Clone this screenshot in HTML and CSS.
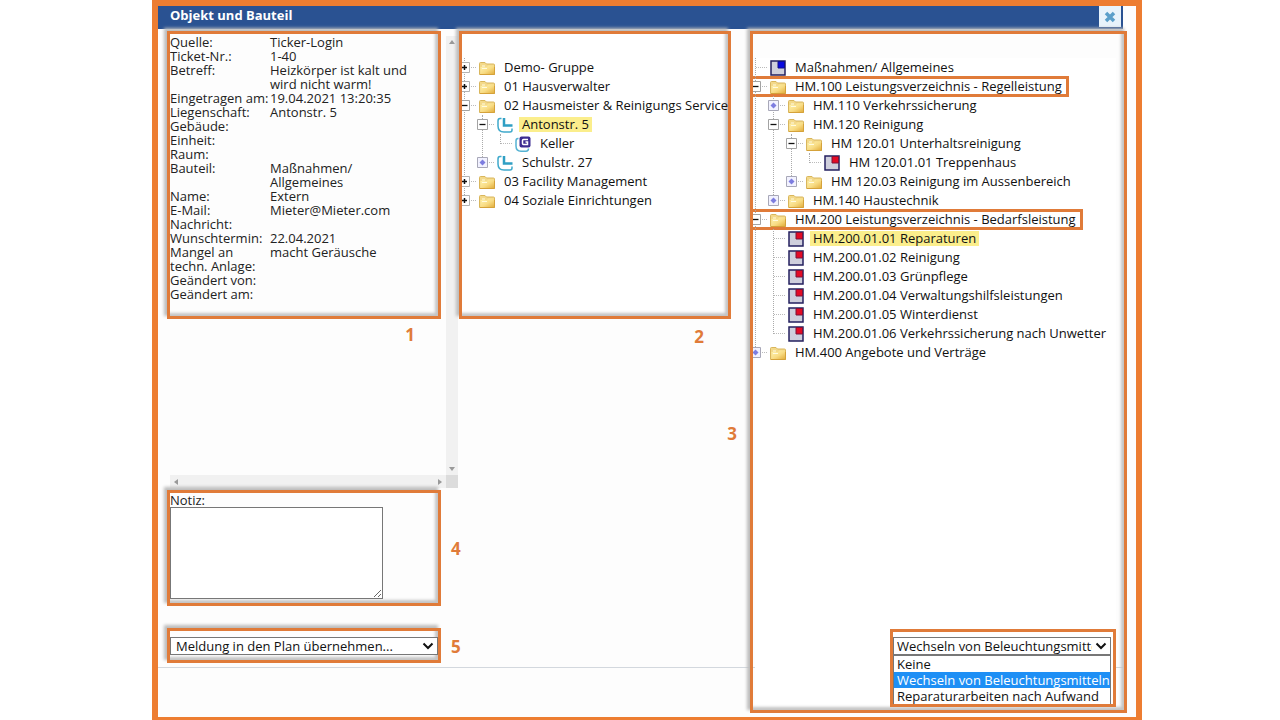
FILE: index.html
```html
<!DOCTYPE html>
<html lang="de">
<head>
<meta charset="utf-8">
<title>Objekt und Bauteil</title>
<link rel="stylesheet" href="styles.css">
</head>
<body>
<svg class="sprite" aria-hidden="true">
  <defs>
    <linearGradient id="gold" x1="0" y1="0" x2="1" y2="1">
      <stop offset="0" stop-color="#fff3b0"/><stop offset="0.55" stop-color="#f8dc84"/><stop offset="1" stop-color="#e3b040"/>
    </linearGradient>
  </defs>
  <symbol id="folder" viewBox="0 0 16 16">
    <path d="M.5 14.500V3.500Q.5 2.500 1.500 2.500H6L7.500 4H14.500Q15.500 4 15.500 5V14.500Z" fill="#f3d98a" stroke="#d9b65c"/>
    <path d="M1.500 14V7H8L9.500 5.500H15V14Z" fill="url(#gold)"/>
    <path d="M3 8.500H8M3 6H6" stroke="#fffbe0"/>
    <path d="M1 14.500H15.500V7" fill="none" stroke="#d5a23a"/>
  </symbol>
  <symbol id="leaf-red" viewBox="0 0 16 16">
    <path d="M1 1H15V15H1Z" fill="#cfcfdc" stroke="#25205f" stroke-width="1.500"/>
    <path d="M8 1.500H14.500V8H8Z" fill="#e30b25" stroke="#7b1238"/>
  </symbol>
  <symbol id="leaf-blue" viewBox="0 0 16 16">
    <path d="M1 1H15V15H1Z" fill="#cfcfdc" stroke="#25205f" stroke-width="1.500"/>
    <path d="M8 1.500H14.500V8H8Z" fill="#0a0ae0" stroke="#10108a"/>
  </symbol>
  <symbol id="estate" viewBox="0 0 16 16">
    <path d="M4.500 1.500H3Q1 1.500 1 4V9Q1 15 7 15H13Q15 15 15 13V11.500" fill="none" stroke="#3fa9cb" stroke-width="1.500"/>
    <path d="M7 1V8.500H15.500" fill="none" stroke="#2f9fc4" stroke-width="2.500"/>
  </symbol>
  <symbol id="building" viewBox="0 0 16 16">
    <path d="M3.500 2.500H3Q1 2.500 1 5V10Q1 15.200 6 15.200H11Q13.500 15.200 13.500 12.500" fill="none" stroke="#55b3d3" stroke-width="1.500"/>
    <rect x="4.500" y="0.500" width="11" height="11" rx="2" fill="#3d2d91"/>
    <path d="M13 3.500H8.500Q7.500 3.500 7.500 4.500V7.500Q7.500 8.500 8.500 8.500H12.500V6H10.500" fill="none" stroke="#fff" stroke-width="1.500"/>
  </symbol>
  <symbol id="plus" viewBox="0 0 11 11">
    <path d="M.5 .5H10.500V10.500H.5Z" fill="#fff" stroke="#b3b3b3"/><path d="M3 5.500H8M5.500 3V8" stroke="#111" stroke-width="1.500"/>
  </symbol>
  <symbol id="minus" viewBox="0 0 11 11">
    <path d="M.5 .5H10.500V10.500H.5Z" fill="#fff" stroke="#a3a3a3"/><path d="M2.500 5.500H8.500" stroke="#111" stroke-width="1.300"/>
  </symbol>
  <symbol id="more" viewBox="0 0 11 11">
    <path d="M.5 .5H10.500V10.500H.5Z" fill="#f2f2ff" stroke="#a8a8b8"/><path d="M5.500 2.500L8.500 5.500L5.500 8.500L2.500 5.500Z" fill="#7d7de0"/>
  </symbol>
</svg>

<div class="window">
  <header class="titlebar">
    <h1 class="title">Objekt und Bauteil</h1>
    <button class="close" type="button" aria-label="Schließen"><svg viewBox="0 0 12 12"><path d="M2 2L10 10M10 2L2 10" stroke="#5b9fca" stroke-width="3.500"/></svg></button>
  </header>

  <main class="content">
    <div class="footer-area"></div>

    <section class="col-details">
      <div class="scroller">
        <div class="view">
          <div class="callout details">
            <dl class="facts">
              <dt>Quelle:</dt><dd>Ticker-Login</dd>
              <dt>Ticket-Nr.:</dt><dd>1-40</dd>
              <dt>Betreff:</dt><dd>Heizkörper ist kalt und<br>wird nicht warm!</dd>
              <dt>Eingetragen am:</dt><dd>19.04.2021 13:20:35</dd>
              <dt>Liegenschaft:</dt><dd>Antonstr. 5</dd>
              <dt>Gebäude:</dt><dd></dd>
              <dt>Einheit:</dt><dd></dd>
              <dt>Raum:</dt><dd></dd>
              <dt>Bauteil:</dt><dd>Maßnahmen/<br>Allgemeines</dd>
              <dt>Name:</dt><dd>Extern</dd>
              <dt>E-Mail:</dt><dd>Mieter@Mieter.com</dd>
              <dt>Nachricht:</dt><dd></dd>
              <dt>Wunschtermin:</dt><dd>22.04.2021</dd>
              <dt>Mangel an<br>techn. Anlage:</dt><dd>macht Geräusche</dd>
              <dt>Geändert von:</dt><dd></dd>
              <dt>Geändert am:</dt><dd></dd>
            </dl>
          </div>
          <p class="mark mark-below">1</p>
        </div>
        <div class="bar bar-v">
          <svg viewBox="0 0 6 4"><path d="M0 4L3 0L6 4Z"/></svg>
          <svg viewBox="0 0 6 4"><path d="M0 0L3 4L6 0Z"/></svg>
        </div>
        <div class="bar bar-h">
          <svg viewBox="0 0 4 6"><path d="M4 0L0 3L4 6Z"/></svg>
          <svg viewBox="0 0 4 6"><path d="M0 0L4 3L0 6Z"/></svg>
        </div>
        <div class="corner"></div>
      </div>
      <div class="marked">
        <div class="callout note">
          <label class="note-label" for="notiz">Notiz:</label>
          <textarea class="note-text" id="notiz"></textarea>
        </div>
        <p class="mark">4</p>
      </div>
      <div class="marked">
        <div class="callout action">
          <div class="field">
            <select class="select" aria-label="Aktion"><option>Meldung in den Plan übernehmen...</option></select>
            <svg class="chevron" viewBox="0 0 12 8"><path d="M1.500 1.500L6 6L10.500 1.500"/></svg>
          </div>
        </div>
        <p class="mark">5</p>
      </div>
    </section>

    <section class="col-objects">
      <div class="callout objects">
        <div class="tree">
          <ul class="branch root">
            <li><div class="row"><span class="twig"><button class="toggle" type="button" aria-label="Öffnen"><svg><use href="#plus"/></svg></button></span><svg class="icon"><use href="#folder"/></svg><span class="name">Demo- Gruppe</span></div></li>
            <li><div class="row"><span class="twig"><button class="toggle" type="button" aria-label="Öffnen"><svg><use href="#plus"/></svg></button></span><svg class="icon"><use href="#folder"/></svg><span class="name">01 Hausverwalter</span></div></li>
            <li><div class="row"><span class="twig"><button class="toggle" type="button" aria-label="Schließen"><svg><use href="#minus"/></svg></button></span><svg class="icon"><use href="#folder"/></svg><span class="name">02 Hausmeister &amp; Reinigungs Service</span></div>
              <ul class="branch">
                <li><div class="row"><span class="twig"><button class="toggle" type="button" aria-label="Schließen"><svg><use href="#minus"/></svg></button></span><svg class="icon"><use href="#estate"/></svg><span class="name chosen">Antonstr. 5</span></div>
                  <ul class="branch">
                    <li><div class="row"><span class="twig"></span><svg class="icon"><use href="#building"/></svg><span class="name">Keller</span></div></li>
                  </ul>
                </li>
                <li><div class="row"><span class="twig"><button class="toggle" type="button" aria-label="Öffnen"><svg><use href="#more"/></svg></button></span><svg class="icon"><use href="#estate"/></svg><span class="name">Schulstr. 27</span></div></li>
              </ul>
            </li>
            <li><div class="row"><span class="twig"><button class="toggle" type="button" aria-label="Öffnen"><svg><use href="#plus"/></svg></button></span><svg class="icon"><use href="#folder"/></svg><span class="name">03 Facility Management</span></div></li>
            <li><div class="row"><span class="twig"><button class="toggle" type="button" aria-label="Öffnen"><svg><use href="#plus"/></svg></button></span><svg class="icon"><use href="#folder"/></svg><span class="name">04 Soziale Einrichtungen</span></div></li>
          </ul>
        </div>
      </div>
      <p class="mark mark-below">2</p>
      <p class="mark mark-side">3</p>
    </section>

    <section class="callout services">
      <div class="tree">
        <ul class="branch root">
          <li><div class="row"><span class="twig"></span><svg class="icon"><use href="#leaf-blue"/></svg><span class="name">Maßnahmen/ Allgemeines</span></div></li>
          <li><div class="row framed"><span class="twig"><button class="toggle" type="button" aria-label="Schließen"><svg><use href="#minus"/></svg></button></span><svg class="icon"><use href="#folder"/></svg><span class="name">HM.100 Leistungsverzeichnis - Regelleistung</span></div>
            <ul class="branch">
              <li><div class="row"><span class="twig"><button class="toggle" type="button" aria-label="Öffnen"><svg><use href="#more"/></svg></button></span><svg class="icon"><use href="#folder"/></svg><span class="name">HM.110 Verkehrssicherung</span></div></li>
              <li><div class="row"><span class="twig"><button class="toggle" type="button" aria-label="Schließen"><svg><use href="#minus"/></svg></button></span><svg class="icon"><use href="#folder"/></svg><span class="name">HM.120 Reinigung</span></div>
                <ul class="branch">
                  <li><div class="row"><span class="twig"><button class="toggle" type="button" aria-label="Schließen"><svg><use href="#minus"/></svg></button></span><svg class="icon"><use href="#folder"/></svg><span class="name">HM 120.01 Unterhaltsreinigung</span></div>
                    <ul class="branch">
                      <li><div class="row"><span class="twig"></span><svg class="icon"><use href="#leaf-red"/></svg><span class="name">HM 120.01.01 Treppenhaus</span></div></li>
                    </ul>
                  </li>
                  <li><div class="row"><span class="twig"><button class="toggle" type="button" aria-label="Öffnen"><svg><use href="#more"/></svg></button></span><svg class="icon"><use href="#folder"/></svg><span class="name">HM 120.03 Reinigung im Aussenbereich</span></div></li>
                </ul>
              </li>
              <li><div class="row"><span class="twig"><button class="toggle" type="button" aria-label="Öffnen"><svg><use href="#more"/></svg></button></span><svg class="icon"><use href="#folder"/></svg><span class="name">HM.140 Haustechnik</span></div></li>
            </ul>
          </li>
          <li><div class="row framed"><span class="twig"><button class="toggle" type="button" aria-label="Schließen"><svg><use href="#minus"/></svg></button></span><svg class="icon"><use href="#folder"/></svg><span class="name">HM.200 Leistungsverzeichnis - Bedarfsleistung</span></div>
            <ul class="branch">
              <li><div class="row"><span class="twig"></span><svg class="icon"><use href="#leaf-red"/></svg><span class="name chosen">HM.200.01.01 Reparaturen</span></div></li>
              <li><div class="row"><span class="twig"></span><svg class="icon"><use href="#leaf-red"/></svg><span class="name">HM.200.01.02 Reinigung</span></div></li>
              <li><div class="row"><span class="twig"></span><svg class="icon"><use href="#leaf-red"/></svg><span class="name">HM.200.01.03 Grünpflege</span></div></li>
              <li><div class="row"><span class="twig"></span><svg class="icon"><use href="#leaf-red"/></svg><span class="name">HM.200.01.04 Verwaltungshilfsleistungen</span></div></li>
              <li><div class="row"><span class="twig"></span><svg class="icon"><use href="#leaf-red"/></svg><span class="name">HM.200.01.05 Winterdienst</span></div></li>
              <li><div class="row"><span class="twig"></span><svg class="icon"><use href="#leaf-red"/></svg><span class="name">HM.200.01.06 Verkehrssicherung nach Unwetter</span></div></li>
            </ul>
          </li>
          <li><div class="row"><span class="twig"><button class="toggle" type="button" aria-label="Öffnen"><svg><use href="#more"/></svg></button></span><svg class="icon"><use href="#folder"/></svg><span class="name">HM.400 Angebote und Verträge</span></div></li>
        </ul>
      </div>
      <div class="picker">
        <div class="field">
          <select class="select" aria-label="Leistung">
            <option>Keine</option>
            <option selected>Wechseln von Beleuchtungsmitteln</option>
            <option>Reparaturarbeiten nach Aufwand</option>
          </select>
          <svg class="chevron" viewBox="0 0 12 8"><path d="M1.500 1.500L6 6L10.500 1.500"/></svg>
        </div>
        <ul class="options" role="listbox" aria-label="Leistung">
          <li class="option" role="option">Keine</li>
          <li class="option active" role="option" aria-selected="true">Wechseln von Beleuchtungsmitteln</li>
          <li class="option" role="option">Reparaturarbeiten nach Aufwand</li>
        </ul>
      </div>
    </section>
  </main>
</div>
</body>
</html>
```

FILE: styles.css
```css
* { box-sizing: border-box; }

body {
  margin: 0;
  padding: 0 138px 0 152px;
  background: #fff;
  color: #222;
  font: 13px/14px "Open Sans", "Noto Sans", sans-serif;
}

ul, dl, dd, p, h1 { margin: 0; padding: 0; list-style: none; }

.sprite { position: absolute; width: 0; height: 0; }

.window {
  display: flex;
  flex-direction: column;
  min-height: 100vh;
  border: 6px solid #ed7d31;
  border-bottom-width: 3px;
  background: #fdfdfd;
}

.titlebar {
  display: flex;
  align-items: flex-start;
  justify-content: space-between;
  height: 23px;
  margin-right: 13px;
  padding: 0 2px 0 12px;
  background: #2a5292;
}

.title { color: #fff; font-size: 13px; line-height: 18px; font-weight: bold; }

.close {
  display: flex;
  align-items: center;
  justify-content: center;
  width: 22px;
  height: 21px;
  padding: 0;
  border: 0;
  background: #e8f3fb;
}
.close svg { width: 12px; height: 12px; }

.content {
  flex: 1;
  display: grid;
  grid-template-columns: minmax(0, 291fr) minmax(0, 292fr) minmax(0, 377fr);
  grid-template-rows: 1fr 50px;
  padding: 0 9px;
}

.footer-area {
  grid-area: 2 / 1 / 3 / -1;
  margin: 0 4px 0 -9px;
  border-top: 1px solid #d3d8de;
}

.callout {
  border: 3px solid #e07b39;
  box-shadow: -3px -3px 3px #bcbcbc, inset -3px -3px 3px #c4c4c4;
}

.mark { color: #e07b39; font-size: 17px; line-height: 20px; font-weight: bold; }
.mark-below { margin-top: 6px; padding-right: 26px; text-align: right; }

/* left column */
.col-details { grid-area: 1 / 1; display: flex; flex-direction: column; padding-top: 2px; }

.scroller {
  display: grid;
  grid-template-columns: 1fr 12px;
  grid-template-rows: 444px 13px;
  margin-bottom: 2px;
}
.view { padding-right: 5px; }
.details { min-height: 288px; padding-top: 1px; }
.facts { display: grid; grid-template-columns: 100px 1fr; white-space: nowrap; }

.bar { display: flex; justify-content: space-between; align-items: center; background: #f1f1f1; fill: #999; }
.bar-v { flex-direction: column; margin-top: 5px; padding: 4px 0; }
.bar-v svg { width: 6px; height: 4px; }
.bar-h { margin-left: 3px; padding: 0 4px; }
.bar-h svg { width: 4px; height: 6px; }
.corner { background: #dcdcdc; }

.marked { display: grid; grid-template-columns: 1fr 17px; align-items: center; }
.marked + .marked { margin-top: 22px; }
.marked .mark { padding: 2px 0 0 10px; white-space: nowrap; }

.note { height: 116px; }
.note-label { display: block; }
.note-text {
  display: block;
  width: 213px;
  height: 92px;
  border: 1px solid #777;
  background: #fff;
  font: inherit;
}

.action { height: 35px; padding-top: 6px; }

.field { position: relative; }
.select {
  appearance: none;
  display: block;
  width: 100%;
  height: 18px;
  padding: 0 18px 0 5px;
  border: 1px solid #777;
  border-radius: 0;
  background: #fff;
  color: #111;
  font: inherit;
  line-height: 16px;
}
.chevron {
  position: absolute;
  right: 4px;
  top: 5px;
  width: 12px;
  height: 8px;
  fill: none;
  stroke: #111;
  stroke-width: 2;
  pointer-events: none;
}

/* middle column */
.col-objects { grid-area: 1 / 2; display: flex; flex-direction: column; padding-top: 2px; }
.objects { min-height: 288px; margin: 0 19px 0 1px; padding-top: 24px; background: #fff; }
.col-objects .mark-below { margin-top: 8px; padding-right: 46px; }
.mark-side { margin-top: 77px; padding-right: 13px; text-align: right; }

/* right column */
.services {
  grid-area: 1 / 3 / 3 / 4;
  position: relative;
  display: flex;
  flex-direction: column;
  justify-content: space-between;
  margin: 2px 0 4px;
  padding: 24px 8px 3px 2px;
  background: #fff;
  background-clip: content-box;
}
.services .tree { margin-left: -2px; }

.picker {
  align-self: flex-end;
  width: 226px;
  border: 3px solid #e07b39;
  padding: 5px 2px 0 0;
}
.picker .select { padding-left: 3px; }
.options { border: 1px solid #777; border-bottom: 0; background: #fff; }
.option { padding: 0 3px; line-height: 16px; color: #111; white-space: nowrap; }
.active { background: #1e8ff5; color: #fff; }

/* trees */
.tree { overflow: hidden; color: #111; }
.branch { position: relative; padding-left: 18px; }
.root { padding-left: 0; margin-left: -3px; }
.branch::before {
  content: "";
  position: absolute;
  top: 0;
  bottom: 9px;
  margin-left: 5px;
  border-left: 1px dotted #aaa;
}
.row { display: flex; align-items: center; width: fit-content; height: 19px; white-space: nowrap; }
.twig {
  position: relative;
  display: flex;
  width: 20px;
  height: 11px;
  padding: 0 3px 0 6px;
  background: linear-gradient(90deg, #bbb 50%, transparent 50%) 0 5px / 2px 1px repeat-x content-box;
}
.toggle { position: absolute; left: 0; top: 0; width: 11px; height: 11px; padding: 0; border: 0; background: none; }
.toggle svg { display: block; width: 11px; height: 11px; }
.icon { width: 16px; height: 16px; margin-right: 6px; }
.name { padding: 0 3px; line-height: 15px; }
.chosen { background: #fbee8c; }
.framed { outline: 3px solid #e07b39; outline-offset: -2px; padding-right: 3px; }
```
